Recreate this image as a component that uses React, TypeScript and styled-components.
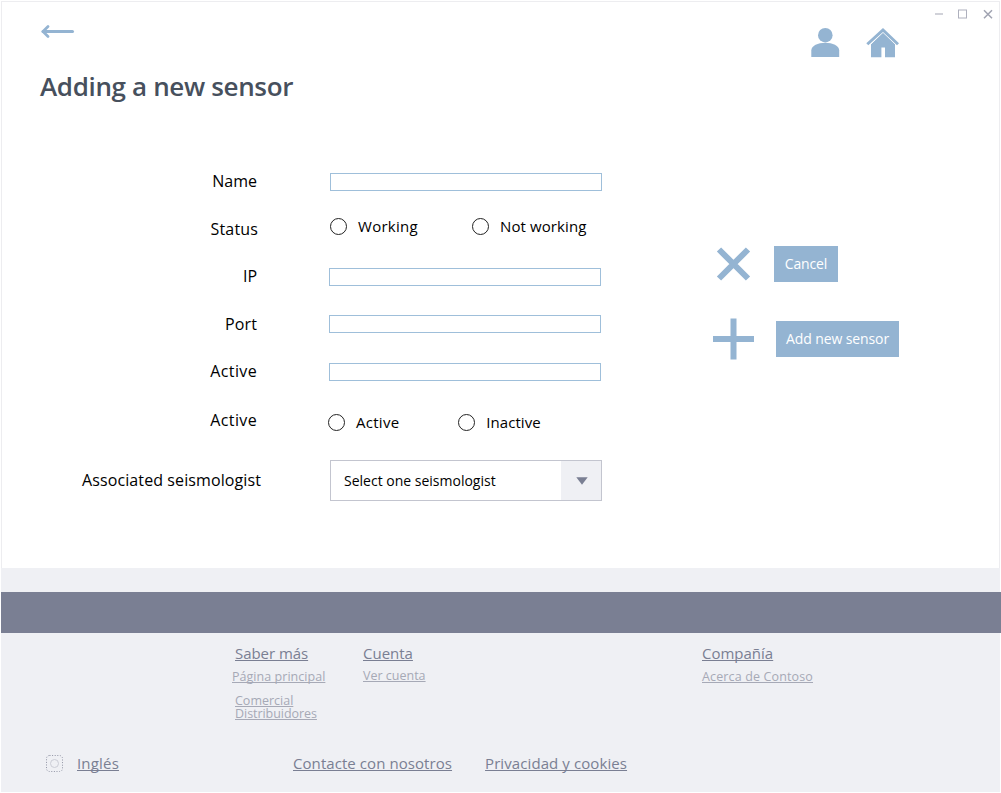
import React from "react";
import styled, { createGlobalStyle } from "styled-components";

const color = {
  blue: "#94b4d2",
  inputBorder: "#9fbfda",
  slate: "#7a7f93",
  slateLight: "#a6a9b6",
  footer: "#eff0f4",
  title: "#47505d",
};

const GlobalStyle = createGlobalStyle`
  * { box-sizing: border-box; }
  body {
    margin: 0;
    background: #fff;
    font-family: "Open Sans", "Noto Sans", sans-serif;
    color: #000;
  }
`;

const Window = styled.div`
  display: flex;
  flex-direction: column;
  width: 1000px;
  height: 793px;
  padding: 1px 0 1px 1px;
`;

const Page = styled.main`
  display: flex;
  flex-direction: column;
  width: 999px;
  height: 567px;
  border: 1px solid #ededf0;
  border-bottom: none;
`;

const Header = styled.header`
  display: flex;
  justify-content: space-between;
  height: 155px;
`;

const Heading = styled.div`
  display: flex;
  flex-direction: column;
  gap: 35px;
  padding: 22px 0 0 38px;
`;

const BackLink = styled.a`
  display: flex;
  height: 14px;
`;

const Title = styled.h1`
  margin: 0;
  font-size: 26px;
  line-height: 26px;
  font-weight: 600;
  letter-spacing: -0.35px;
  color: ${color.title};
`;

const HeaderRight = styled.div`
  display: flex;
  align-items: flex-start;
`;

const QuickLinks = styled.nav`
  display: flex;
  gap: 26px;
  padding: 25px 34px 0 0;
`;

const WindowControls = styled.div`
  display: flex;
  gap: 14px;
  padding: 6px 5px 0 0;
`;

const Body = styled.div`
  display: flex;
`;

const Form = styled.form`
  display: flex;
  flex-direction: column;
  width: 601px;
`;

const Row = styled.div<{ $height: number }>`
  display: flex;
  align-items: center;
  height: ${(p) => p.$height}px;
`;

const Label = styled.label<{ $inset?: number; $track?: number }>`
  width: 259px;
  padding-right: ${(p) => p.$inset ?? 4}px;
  margin-right: 68px;
  text-align: right;
  white-space: nowrap;
  font-size: 16px;
  line-height: 22px;
  letter-spacing: ${(p) => p.$track ?? 0}px;
`;

const TextInput = styled.input<{ $shift?: number }>`
  width: 272px;
  height: 18px;
  margin: 1px 0 0 ${(p) => p.$shift ?? 0}px;
  padding: 0 4px;
  border: 1px solid ${color.inputBorder};
  border-radius: 0;
  background: #fff;
  outline: none;
`;

const RadioGroup = styled.div<{ $gap: number; $lift: number; $inset?: number }>`
  display: flex;
  gap: ${(p) => p.$gap}px;
  margin-bottom: ${(p) => p.$lift}px;
  margin-left: ${(p) => p.$inset ?? 0}px;
`;

const Radio = styled.label<{ $track: number }>`
  display: flex;
  align-items: flex-start;
  gap: 11px;
  white-space: nowrap;
  font-size: 15px;
  line-height: 20px;
  letter-spacing: ${(p) => p.$track}px;
`;

const Dot = styled.span`
  width: 17px;
  height: 17px;
  margin-top: 2px;
  border: 1px solid #222;
  border-radius: 50%;
`;

const Select = styled.div`
  display: flex;
  justify-content: space-between;
  width: 272px;
  height: 41px;
  margin-left: 1px;
  border: 1px solid #c3c5cf;
  font-size: 14px;
  line-height: 39px;
`;

const SelectValue = styled.span`
  padding-left: 13px;
`;

const SelectArrow = styled.span`
  display: flex;
  align-items: center;
  justify-content: center;
  width: 40px;
  padding: 2px 0 0 2px;
  background: ${color.footer};
`;

const Actions = styled.div`
  display: flex;
  flex-direction: column;
  gap: 33px;
  padding: 86px 0 0 110px;
`;

const Action = styled.div`
  display: flex;
  align-items: center;
  height: 42px;
`;

const ActionIcon = styled.span<{ $gap: number }>`
  display: flex;
  width: 42px;
  margin-right: ${(p) => p.$gap}px;
`;

const Button = styled.button<{ $width: number; $track: number }>`
  width: ${(p) => p.$width}px;
  height: 36px;
  padding: 0;
  border: none;
  background: ${color.blue};
  color: #fff;
  font-family: inherit;
  font-size: 14px;
  line-height: 36px;
  letter-spacing: ${(p) => p.$track}px;
`;

const Footer = styled.footer`
  display: flex;
  flex-direction: column;
  width: 999px;
  height: 224px;
  background: ${color.footer};
`;

const Band = styled.div`
  flex: none;
  width: 1000px;
  height: 41px;
  margin-top: 24px;
  background: ${color.slate};
`;

const LinkColumns = styled.div`
  display: flex;
  height: 111px;
  padding: 10px 0 0 231px;
`;

const LinkColumn = styled.div<{ $width?: number }>`
  display: flex;
  flex-direction: column;
  align-items: flex-start;
  width: ${(p) => p.$width ?? 150}px;
`;

const FooterLink = styled.a<{ $track?: number; $indent?: number }>`
  margin-left: ${(p) => p.$indent ?? 0}px;
  font-size: 15px;
  line-height: 20px;
  letter-spacing: ${(p) => p.$track ?? 0}px;
  white-space: nowrap;
  color: ${color.slate};
  text-decoration: underline 1px;
  text-underline-offset: 1px;
  text-decoration-skip-ink: none;
`;

const SubLink = styled(FooterLink)<{ $line?: number; $top?: number }>`
  margin-top: ${(p) => p.$top ?? 5}px;
  font-size: 12.5px;
  line-height: ${(p) => p.$line ?? 18}px;
  color: ${color.slateLight};
`;

const LegalBar = styled.div`
  display: flex;
  align-items: center;
  height: 38px;
  padding-left: 44px;
`;

const Language = styled.div`
  display: flex;
  align-items: center;
  gap: 13px;
  width: 248px;
`;

const LegalLinks = styled.div`
  display: flex;
  gap: 33px;
`;

const Arrow = () => (
  <svg width="36" height="14" viewBox="0 0 36 14" fill="none" stroke={color.blue} strokeLinecap="round" strokeLinejoin="round">
    <path d="M3 7.5H32.5" strokeWidth="3" />
    <path d="M8 2.5L3 7.5L8 12.5" strokeWidth="2.7" />
  </svg>
);

const Person = () => (
  <svg width="29" height="31" viewBox="0 0 29 31" fill={color.blue}>
    <circle cx="14.3" cy="8.2" r="7.3" />
    <path d="M0.3 30V23.5C0.3 18.5 7 15.7 14.3 15.7S28.2 18.5 28.2 23.5V30Z" />
  </svg>
);

const Home = () => (
  <svg width="34" height="31" viewBox="0 0 34 31">
    <path d="M17 5.2L29 17.2V30.3H19V20.5H15.4V30.3H5V17.2Z" fill={color.blue} />
    <path d="M1.6 17.6L17 3L32.4 17.6" fill="none" stroke="#fff" strokeWidth="4.2" />
    <path d="M0.3 16.2L17 1L33 16.2L31 18.2L17 4.9L2.3 18.2Z" fill={color.blue} />
  </svg>
);

const Minimize = () => (
  <svg width="10" height="12" viewBox="0 0 10 12">
    <path d="M1 6H9" stroke="#c6c7d0" strokeWidth="1.6" />
  </svg>
);

const Maximize = () => (
  <svg width="10" height="12" viewBox="0 0 10 12">
    <rect x="0.5" y="2" width="8" height="8" fill="none" stroke="#aeb0bd" />
  </svg>
);

const Close = () => (
  <svg width="12" height="12" viewBox="0 0 12 12">
    <path d="M2 2.2L10 10.2M10 2.2L2 10.2" stroke="#a0a3b1" strokeWidth="1.5" />
  </svg>
);

const Cross = () => (
  <svg width="42" height="42" viewBox="0 0 42 42">
    <path d="M6 6.5L35 35.5M35 6.5L6 35.5" stroke={color.blue} strokeWidth="6" />
  </svg>
);

const Plus = () => (
  <svg width="42" height="42" viewBox="0 0 42 42">
    <path d="M0 21H41M20.5 0.5V41.5" stroke={color.blue} strokeWidth="6" />
  </svg>
);

const Triangle = () => (
  <svg width="12" height="8" viewBox="0 0 12 8">
    <path d="M0.3 0.3H11.7L6 7.8Z" fill={color.slate} />
  </svg>
);

const Globe = () => (
  <svg width="19" height="18" viewBox="0 0 19 18" fill="none">
    <rect x="1.5" y="1.5" width="16" height="16" rx="3" stroke="#9194a4" strokeDasharray="1 1.6" />
    <circle cx="9.5" cy="9.5" r="4" stroke="#cbcdd6" />
  </svg>
);

export default function App() {
  return (
    <>
      <GlobalStyle />
      <Window>
        <Page>
          <Header>
            <Heading>
              <BackLink><Arrow /></BackLink>
              <Title>Adding a new sensor</Title>
            </Heading>
            <HeaderRight>
              <QuickLinks>
                <Person />
                <Home />
              </QuickLinks>
              <WindowControls>
                <Minimize />
                <Maximize />
                <Close />
              </WindowControls>
            </HeaderRight>
          </Header>
          <Body>
            <Form>
              <Row $height={48}>
                <Label>Name</Label>
                <TextInput $shift={1} />
              </Row>
              <Row $height={48}>
                <Label $track={0.15} $inset={3}>Status</Label>
                <RadioGroup $gap={54} $lift={7} $inset={1}>
                  <Radio $track={0.28}><Dot />Working</Radio>
                  <Radio $track={0.1}><Dot />Not working</Radio>
                </RadioGroup>
              </Row>
              <Row $height={46}>
                <Label $track={-0.1}>IP</Label>
                <TextInput />
              </Row>
              <Row $height={49}>
                <Label $track={0.1}>Port</Label>
                <TextInput />
              </Row>
              <Row $height={46}>
                <Label $track={0.36}>Active</Label>
                <TextInput />
              </Row>
              <Row $height={51}>
                <Label $track={0.36}>Active</Label>
                <RadioGroup $gap={59} $lift={-4} $inset={-1}>
                  <Radio $track={0.27}><Dot />Active</Radio>
                  <Radio $track={0.05}><Dot />Inactive</Radio>
                </RadioGroup>
              </Row>
              <Row $height={70}>
                <Label $inset={0} $track={0.1}>Associated seismologist</Label>
                <Select>
                  <SelectValue>Select one seismologist</SelectValue>
                  <SelectArrow><Triangle /></SelectArrow>
                </Select>
              </Row>
            </Form>
            <Actions>
              <Action>
                <ActionIcon $gap={19}><Cross /></ActionIcon>
                <Button $width={64} $track={-0.15}>Cancel</Button>
              </Action>
              <Action>
                <ActionIcon $gap={21}><Plus /></ActionIcon>
                <Button $width={123} $track={-0.1}>Add new sensor</Button>
              </Action>
            </Actions>
          </Body>
        </Page>
        <Footer>
          <Band />
          <LinkColumns>
            <LinkColumn $width={131}>
              <FooterLink $indent={3} $track={-0.05}>Saber más</FooterLink>
              <SubLink $track={0.04}>Página principal</SubLink>
              <SubLink $indent={3} $line={13} $top={8}>Comercial</SubLink>
              <SubLink $indent={3} $line={13} $top={0} $track={-0.05}>Distribuidores</SubLink>
            </LinkColumn>
            <LinkColumn $width={339}>
              <FooterLink>Cuenta</FooterLink>
              <SubLink $top={4}>Ver cuenta</SubLink>
            </LinkColumn>
            <LinkColumn>
              <FooterLink>Compañía</FooterLink>
              <SubLink $track={0.14}>Acerca de Contoso</SubLink>
            </LinkColumn>
          </LinkColumns>
          <LegalBar>
            <Language>
              <Globe />
              <FooterLink $track={0.18}>Inglés</FooterLink>
            </Language>
            <LegalLinks>
              <FooterLink $track={0.07}>Contacte con nosotros</FooterLink>
              <FooterLink $track={0.09}>Privacidad y cookies</FooterLink>
            </LegalLinks>
          </LegalBar>
        </Footer>
      </Window>
    </>
  );
}
